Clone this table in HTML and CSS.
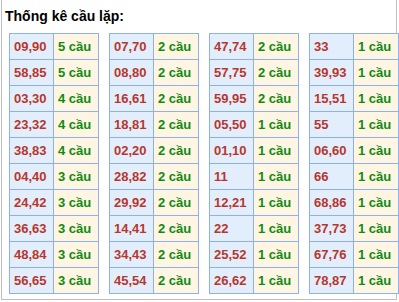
FILE: index.html
```html
<!DOCTYPE html>
<html>
<head>
<meta charset="utf-8">
<link rel="stylesheet" href="styles.css">
</head>
<body>
<div class="box">
  <div class="title">Thống kê cầu lặp:</div>
  <div class="tables">
    <table class="t">
      <tr><td class="n">09,90</td><td class="c">5 cầu</td></tr>
      <tr><td class="n">58,85</td><td class="c">5 cầu</td></tr>
      <tr><td class="n">03,30</td><td class="c">4 cầu</td></tr>
      <tr><td class="n">23,32</td><td class="c">4 cầu</td></tr>
      <tr><td class="n">38,83</td><td class="c">4 cầu</td></tr>
      <tr><td class="n">04,40</td><td class="c">3 cầu</td></tr>
      <tr><td class="n">24,42</td><td class="c">3 cầu</td></tr>
      <tr><td class="n">36,63</td><td class="c">3 cầu</td></tr>
      <tr><td class="n">48,84</td><td class="c">3 cầu</td></tr>
      <tr><td class="n">56,65</td><td class="c">3 cầu</td></tr>
    </table>
    <table class="t">
      <tr><td class="n">07,70</td><td class="c">2 cầu</td></tr>
      <tr><td class="n">08,80</td><td class="c">2 cầu</td></tr>
      <tr><td class="n">16,61</td><td class="c">2 cầu</td></tr>
      <tr><td class="n">18,81</td><td class="c">2 cầu</td></tr>
      <tr><td class="n">02,20</td><td class="c">2 cầu</td></tr>
      <tr><td class="n">28,82</td><td class="c">2 cầu</td></tr>
      <tr><td class="n">29,92</td><td class="c">2 cầu</td></tr>
      <tr><td class="n">14,41</td><td class="c">2 cầu</td></tr>
      <tr><td class="n">34,43</td><td class="c">2 cầu</td></tr>
      <tr><td class="n">45,54</td><td class="c">2 cầu</td></tr>
    </table>
    <table class="t">
      <tr><td class="n">47,74</td><td class="c">2 cầu</td></tr>
      <tr><td class="n">57,75</td><td class="c">2 cầu</td></tr>
      <tr><td class="n">59,95</td><td class="c">2 cầu</td></tr>
      <tr><td class="n">05,50</td><td class="c">1 cầu</td></tr>
      <tr><td class="n">01,10</td><td class="c">1 cầu</td></tr>
      <tr><td class="n">11</td><td class="c">1 cầu</td></tr>
      <tr><td class="n">12,21</td><td class="c">1 cầu</td></tr>
      <tr><td class="n">22</td><td class="c">1 cầu</td></tr>
      <tr><td class="n">25,52</td><td class="c">1 cầu</td></tr>
      <tr><td class="n">26,62</td><td class="c">1 cầu</td></tr>
    </table>
    <table class="t">
      <tr><td class="n">33</td><td class="c">1 cầu</td></tr>
      <tr><td class="n">39,93</td><td class="c">1 cầu</td></tr>
      <tr><td class="n">15,51</td><td class="c">1 cầu</td></tr>
      <tr><td class="n">55</td><td class="c">1 cầu</td></tr>
      <tr><td class="n">06,60</td><td class="c">1 cầu</td></tr>
      <tr><td class="n">66</td><td class="c">1 cầu</td></tr>
      <tr><td class="n">68,86</td><td class="c">1 cầu</td></tr>
      <tr><td class="n">37,73</td><td class="c">1 cầu</td></tr>
      <tr><td class="n">67,76</td><td class="c">1 cầu</td></tr>
      <tr><td class="n">78,87</td><td class="c">1 cầu</td></tr>
    </table>
  </div>
</div>
</body>
</html>
```
FILE: styles.css
```css
html, body {
  margin: 0;
  padding: 0;
  background: #fff;
}
.box {
  width: 396px;
  height: 300px;
  box-sizing: border-box;
  border: 1px solid #c0c0c0;
  border-top: none;
  margin-left: 1px;
  font-family: "Liberation Sans", Arial, sans-serif;
}
.title {
  font-size: 14px;
  font-weight: bold;
  color: #000;
  padding: 8px 0 0 3px;
  height: 33px;
  box-sizing: border-box;
  line-height: 16px;
}
.tables {
  display: flex;
  align-items: flex-start;
  gap: 10px;
  padding-left: 7px;
}
.t {
  border-collapse: collapse;
  width: 89px;
  table-layout: fixed;
}
.t td {
  border: 1px solid #8db1f0;
  height: 25px;
  padding: 0 0 0 4px;
  text-align: left;
  font-size: 13px;
  font-weight: bold;
  box-sizing: content-box;
  white-space: nowrap;
}
.t td.n {
  width: 39px;
  background: #e3eefd;
  color: #b8362c;
}
.t td.c {
  width: 40px;
  background: #fff5e3;
  color: #118a11;
}
```
